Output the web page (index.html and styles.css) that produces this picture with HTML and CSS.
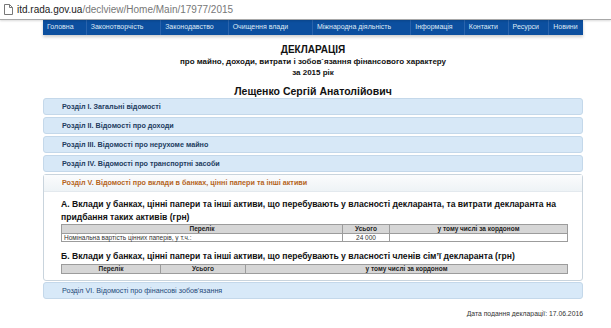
FILE: index.html
```html
<!DOCTYPE html>
<html lang="uk">
<head>
  <meta charset="UTF-8">
  <title>Декларація</title>
  <link rel="stylesheet" href="styles.css">
</head>
<body>

  <div class="address">
    <svg class="page-icon" width="9" height="11" viewBox="0 0 9 11">
      <path d="M0.5 0.5h5l3 3v7h-8z" fill="#fff" stroke="#777"/>
      <path d="M5.5 0.5v3h3" fill="none" stroke="#777"/>
    </svg>
    <span class="host">itd.rada.gov.ua</span><span class="path">/declview/Home/Main/17977/2015</span>
  </div>

  <div class="wrap">
    <div class="nav">
      <a class="w44">Головна</a>
      <a class="w75">Законотворчість</a>
      <a class="w68">Законодавство</a>
      <a class="w85">Очищення влади</a>
      <a class="w100">Міжнародна діяльність</a>
      <a class="w54">Інформація</a>
      <a class="w44">Контакти</a>
      <a class="w40">Ресурси</a>
      <a class="w33">Новини</a>
    </div>

    <div class="title">
      <h1>ДЕКЛАРАЦІЯ</h1>
      <p>про майно, доходи, витрати і зобов`язання фінансового характеру</p>
      <p>за 2015 рік</p>
      <h2>Лещенко Сергій Анатолійович</h2>
    </div>

    <div class="section">Розділ I. Загальні відомості</div>
    <div class="section">Розділ II. Відомості про доходи</div>
    <div class="section">Розділ III. Відомості про нерухоме майно</div>
    <div class="section">Розділ IV. Відомості про транспортні засоби</div>

    <div class="open">
      <div class="open-head">Розділ V. Відомості про вклади в банках, цінні папери та інші активи</div>
      <div class="open-body">
        <h3>А. Вклади у банках, цінні папери та інші активи, що перебувають у власності декларанта, та витрати декларанта на придбання таких активів (грн)</h3>
        <table class="tbl tbl-a">
          <tr><th class="c1">Перелік</th><th class="c2">Усього</th><th>у тому числі за кордоном</th></tr>
          <tr><td>Номінальна вартість цінних паперів, у т.ч.:</td><td class="num">24 000</td><td></td></tr>
        </table>
        <h3 class="b">Б. Вклади у банках, цінні папери та інші активи, що перебувають у власності членів сім’ї декларанта (грн)</h3>
        <table class="tbl tbl-b">
          <tr><th class="c1">Перелік</th><th class="c2">Усього</th><th>у тому числі за кордоном</th></tr>
        </table>
      </div>
    </div>

    <div class="section last">Розділ VI. Відомості про фінансові зобов'язання</div>

    <div class="date">Дата подання декларації: 17.06.2016</div>
  </div>

</body>
</html>
```

FILE: styles.css
```css
body {
  margin: 0;
  background: #fff;
  font-family: 'Liberation Sans', Arial, sans-serif;
  color: #222;
}

.address {
  height: 19px;
  border-bottom: 1px solid #a8a8a8;
  box-shadow: 0 1px 2px rgba(0, 0, 0, 0.15);
  display: flex;
  align-items: center;
  padding-left: 4px;
  font-size: 10px;
  position: relative;
  z-index: 2;
}

.page-icon {
  margin-right: 4px;
}

.host { color: #222; }
.path { color: #777; }

.wrap {
  width: 540px;
  margin-left: 43px;
}

.nav {
  display: flex;
  height: 15px;
  background: #0c4f9f;
  box-shadow: 0 2px 3px rgba(0, 0, 0, 0.2);
}

.nav a {
  display: block;
  color: #dfe9f5;
  font-size: 7px;
  line-height: 13px;
  padding-left: 4px;
  border-right: 1px solid #2a64ad;
  box-sizing: border-box;
}

.nav a:last-child { border-right: none; }

.w44 { width: 44px; }
.w75 { width: 75px; }
.w68 { width: 68px; }
.w85 { width: 85px; }
.w100 { width: 99px; }
.w54 { width: 54px; }
.w40 { width: 41px; }
.w33 { width: 34px; }

.title {
  text-align: center;
  color: #111;
  padding-top: 8px;
  margin-bottom: 0;
}

.title h1 {
  margin: 0;
  font-size: 10px;
  line-height: 13px;
}

.title p {
  margin: 0;
  font-size: 8px;
  font-weight: bold;
  line-height: 11px;
}

.title h2 {
  margin: 7px 0 0;
  font-size: 10.5px;
  line-height: 13px;
}

.section {
  height: 17px;
  line-height: 16px;
  margin-bottom: 2px;
  padding-left: 18px;
  background: #d7e8f7;
  border: 1px solid #c4d8ea;
  border-radius: 3px;
  box-sizing: border-box;
  font-size: 7.2px;
  font-weight: bold;
  color: #1d3c5e;
}

.section.last {
  font-weight: normal;
  background: #d8e9f8;
  color: #1f4a78;
}

.open {
  border: 1px solid #c9d4dd;
  border-radius: 3px;
  margin-bottom: 1px;
}

.open-head {
  height: 16px;
  line-height: 16px;
  padding-left: 18px;
  background: linear-gradient(#fbfcfd, #eef3f6);
  border-bottom: 1px solid #e3e9ee;
  font-size: 7.2px;
  font-weight: bold;
  color: #b5651d;
}

.open-body {
  padding: 6px 16px 6px 17px;
}

.open-body h3 {
  margin: 0;
  font-size: 8.6px;
  line-height: 13px;
  color: #111;
}

.open-body h3.b {
  margin-top: 8px;
  margin-bottom: 1px;
}

.tbl {
  width: 507px;
  border-collapse: collapse;
  font-size: 6.5px;
}

.tbl th {
  background: #d6d6d6;
  border: 1px solid #9c9c9c;
  height: 8px;
  line-height: 8px;
  padding: 0;
  color: #222;
}

.tbl td {
  border: 1px solid #9c9c9c;
  height: 7px;
  line-height: 7px;
  padding: 0 2px;
  color: #333;
}

.tbl td.num { text-align: center; }

.tbl-a .c1 { width: 280px; }
.tbl-a .c2 { width: 46px; }
.tbl-b .c1 { width: 98px; }
.tbl-b .c2 { width: 84px; }

.date {
  text-align: right;
  font-size: 6.8px;
  color: #333;
  margin-top: 11px;
}
```
